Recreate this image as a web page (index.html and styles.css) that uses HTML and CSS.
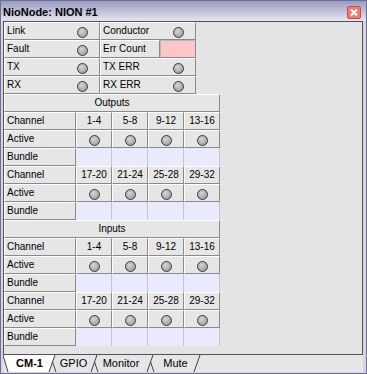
FILE: index.html
```html
<!DOCTYPE html>
<html>
<head>
	<title>NioNode: NION #1</title>
	<link rel="stylesheet" href="styles.css">
</head>
<body>
	<div class="win">
		<div class="title">
			<span class="title-text">NioNode: NION #1</span>
			<span class="close">
				<svg width="14" height="13" viewBox="0 0 14 13">
					<rect x="0.5" y="0.5" width="13" height="12" rx="1.5" fill="#ee7a72" stroke="#c8504a"/>
					<path d="M4 3.5 L10 9.5 M10 3.5 L4 9.5" stroke="#fff" stroke-width="2"/>
				</svg>
			</span>
		</div>
		<div class="panel">
			<div class="status">
				<div class="btn stat"><span>Link</span><i class="led"></i></div>
				<div class="btn stat"><span>Conductor</span><i class="led"></i></div>
				<div class="btn stat"><span>Fault</span><i class="led"></i></div>
				<div class="err"><span class="btn lbl">Err Count</span><span class="pink"></span></div>
				<div class="btn stat"><span>TX</span><i class="led"></i></div>
				<div class="btn stat"><span>TX ERR</span><i class="led"></i></div>
				<div class="btn stat"><span>RX</span><i class="led"></i></div>
				<div class="btn stat"><span>RX ERR</span><i class="led"></i></div>
			</div>
			<div class="sect">
				<div class="btn head">Outputs</div>
				<div class="btn rl">Channel</div>
				<div class="btn num">1-4</div><div class="btn num">5-8</div><div class="btn num">9-12</div><div class="btn num">13-16</div>
				<div class="btn rl">Active</div>
				<div class="btn ac"><i class="led"></i></div><div class="btn ac"><i class="led"></i></div><div class="btn ac"><i class="led"></i></div><div class="btn ac"><i class="led"></i></div>
				<div class="btn rl">Bundle</div>
				<div class="bun"></div><div class="bun"></div><div class="bun"></div><div class="bun"></div>
				<div class="btn rl">Channel</div>
				<div class="btn num">17-20</div><div class="btn num">21-24</div><div class="btn num">25-28</div><div class="btn num">29-32</div>
				<div class="btn rl">Active</div>
				<div class="btn ac"><i class="led"></i></div><div class="btn ac"><i class="led"></i></div><div class="btn ac"><i class="led"></i></div><div class="btn ac"><i class="led"></i></div>
				<div class="btn rl">Bundle</div>
				<div class="bun"></div><div class="bun"></div><div class="bun"></div><div class="bun"></div>

				<div class="btn head">Inputs</div>
				<div class="btn rl">Channel</div>
				<div class="btn num">1-4</div><div class="btn num">5-8</div><div class="btn num">9-12</div><div class="btn num">13-16</div>
				<div class="btn rl">Active</div>
				<div class="btn ac"><i class="led"></i></div><div class="btn ac"><i class="led"></i></div><div class="btn ac"><i class="led"></i></div><div class="btn ac"><i class="led"></i></div>
				<div class="btn rl">Bundle</div>
				<div class="bun"></div><div class="bun"></div><div class="bun"></div><div class="bun"></div>
				<div class="btn rl">Channel</div>
				<div class="btn num">17-20</div><div class="btn num">21-24</div><div class="btn num">25-28</div><div class="btn num">29-32</div>
				<div class="btn rl">Active</div>
				<div class="btn ac"><i class="led"></i></div><div class="btn ac"><i class="led"></i></div><div class="btn ac"><i class="led"></i></div><div class="btn ac"><i class="led"></i></div>
				<div class="btn rl">Bundle</div>
				<div class="bun"></div><div class="bun"></div><div class="bun"></div><div class="bun"></div>
			</div>
		</div>
		<div class="tabs">
			<svg class="tab-lines" width="359" height="17" viewBox="0 0 359 17">
				<polygon points="0,0 52,0 46,17 5,17" fill="#fff"/>
				<g stroke="#404040" stroke-width="1" fill="none">
					<path d="M0 0 L5 17 M46 17 L52 0"/>
					<path d="M49.5 7 L53 17 M88 17 L94 0"/>
					<path d="M91.5 7 L95 17 M144 17 L150 0"/>
					<path d="M147.5 7 L151 17 M191 17 L197 0"/>
				</g>
			</svg>
			<span class="tab sel" style="width:53px">CM-1</span>
			<span class="tab" style="width:35px">GPIO</span>
			<span class="tab" style="width:60px">Monitor</span>
			<span class="tab" style="width:49px">Mute</span>
		</div>
	</div>
</body>
</html>
```

FILE: styles.css
```css
	* {
		box-sizing: border-box;
	}
	body {
		margin: 0;
		padding: 0;
		font-family: "Liberation Sans", Arial, sans-serif;
		font-size: 10px;
		color: #000;
		background: #fff;
	}
	.win {
		width: 367px;
		height: 374px;
		border: 1px solid #6e6e92;
		background: #d6d6e2;
		display: flex;
		flex-direction: column;
	}
	.title {
		height: 20px;
		flex: none;
		display: flex;
		align-items: flex-start;
		background: linear-gradient(#9a9ac0, #e6e6f0);
	}
	.title-text {
		flex: 1;
		font-weight: bold;
		font-size: 11px;
		line-height: 13px;
		padding: 5px 0 0 2px;
	}
	.close {
		width: 14px;
		height: 13px;
		margin: 5px 5px 0 0;
	}
	.close svg {
		display: block;
	}
	.panel {
		margin: 0 3px 0 2px;
		height: 334px;
		flex: none;
		border: 1px solid #505060;
		background: #e4e4e4;
	}
	.status {
		display: grid;
		grid-template-columns: 96px 96px;
		grid-auto-rows: 18px;
	}
	.btn {
		background: #e6e6e6;
		border: 1px solid;
		border-color: #fff #8a8a8a #8a8a8a #fff;
		line-height: 16px;
		white-space: nowrap;
	}
	.stat {
		display: flex;
		justify-content: space-between;
		align-items: flex-start;
		padding-left: 2px;
	}
	.stat .led {
		margin: 4px 11px 0 0;
	}
	.err {
		display: flex;
	}
	.err .lbl {
		flex: 1;
		padding-left: 2px;
	}
	.pink {
		width: 36px;
		background: #ffc6c6;
		border: 1px solid;
		border-color: #b8b8b8 #8a8a8a #8a8a8a #b8b8b8;
	}
	.led {
		display: block;
		width: 11px;
		height: 11px;
		border-radius: 50%;
		border: 1px solid #383838;
		background: radial-gradient(circle at 40% 35%, #d6d6d6, #a2a2a2 75%);
	}
	.sect {
		display: grid;
		grid-template-columns: 72px repeat(4, 36px);
		grid-auto-rows: 18px;
	}
	.head {
		grid-column: 1 / -1;
		text-align: center;
	}
	.rl {
		padding-left: 2px;
	}
	.num {
		text-align: center;
	}
	.ac {
		display: flex;
		justify-content: center;
		align-items: flex-start;
		padding-top: 4px;
	}
	.bun {
		background: #eaeaff;
		border-right: 1px solid #c4c4cc;
	}
	.tabs {
		margin: 0 3px 0 2px;
		height: 17px;
		flex: none;
		position: relative;
		display: flex;
		background: #e6e6e6;
	}
	.tab-lines {
		position: absolute;
		left: 0;
		top: 0;
	}
	.tab {
		position: relative;
		font-size: 11px;
		line-height: 17px;
		text-align: center;
	}
	.sel {
		font-weight: bold;
	}
```
